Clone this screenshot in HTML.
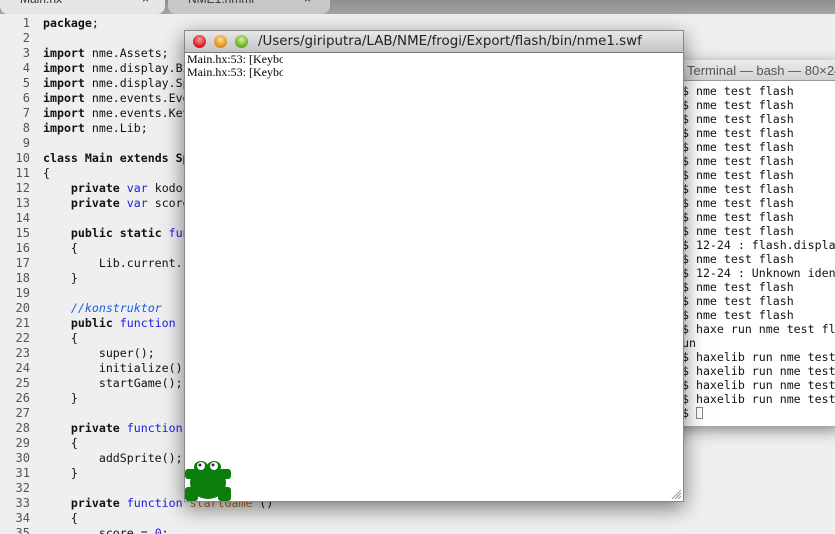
<!DOCTYPE html>
<html><head><style>
*{margin:0;padding:0;box-sizing:border-box}
body{width:835px;height:534px;overflow:hidden;background:#ececec;position:relative;font-family:"DejaVu Sans Mono","Liberation Mono",monospace}
.tabbar{position:absolute;left:0;top:0;width:835px;height:14px;background:linear-gradient(#8e8e8e,#a4a4a4);}
.tab{position:absolute;top:-6px;height:20px;border-radius:0 0 8px 8px;font:12px "Liberation Sans",sans-serif;color:#333;padding-left:20px;line-height:10px}
.editor{position:absolute;left:0;top:14px;width:835px;height:520px;background:#efefef;overflow:hidden}
.ln{position:absolute;left:0;width:30px;text-align:right;color:#555;font-size:12px;line-height:15px}
.code{position:absolute;left:43px;font-size:11.6px;line-height:15px;color:#111;white-space:pre}
.k{font-weight:bold}.b{color:#1a1ae0}.c{color:#1a5ee0;font-style:italic}.o{color:#b36a1a}
.term{position:absolute;left:600px;top:60px;width:240px;height:366px;background:#fff;box-shadow:0 4px 14px rgba(0,0,0,.45)}
.ttitle{height:21px;background:linear-gradient(#ececec,#d2d2d2);border-bottom:1px solid #999;font:13px "Liberation Sans",sans-serif;color:#555;padding-left:87px;line-height:21px;white-space:nowrap;overflow:hidden}
.ttext{position:absolute;left:82px;top:24px;font-size:11.6px;line-height:14px;white-space:pre;color:#111}
.swf{position:absolute;left:184px;top:30px;width:500px;height:472px;background:#fff;box-shadow:0 6px 20px rgba(0,0,0,.5);border:1px solid #888}
.stitle{height:22px;background:linear-gradient(#e8e8e8,#c4c4c4);border-bottom:1px solid #777;font:13.4px "DejaVu Sans",sans-serif;color:#222;line-height:22px;padding-left:73px;white-space:nowrap}
.dot{position:absolute;top:4px;width:13px;height:13px;border-radius:50%}
.stext{position:absolute;left:2px;top:22px;width:96px;overflow:hidden;font:12px "Liberation Serif",serif;line-height:13px;white-space:nowrap;color:#000}
</style></head><body>
<div class="editor">
<div class="ln" style="top:2px">1<br>2<br>3<br>4<br>5<br>6<br>7<br>8<br>9<br>10<br>11<br>12<br>13<br>14<br>15<br>16<br>17<br>18<br>19<br>20<br>21<br>22<br>23<br>24<br>25<br>26<br>27<br>28<br>29<br>30<br>31<br>32<br>33<br>34<br>35</div>
<div class="code" style="top:2px"><span class="k">package</span>;

<span class="k">import</span> nme.Assets;
<span class="k">import</span> nme.display.Bitmap;
<span class="k">import</span> nme.display.Sprite;
<span class="k">import</span> nme.events.Event;
<span class="k">import</span> nme.events.KeyboardEvent;
<span class="k">import</span> nme.Lib;

<span class="k">class</span> <span class="k">Main</span> <span class="k">extends</span> <span class="k">Sprite</span>
{
    <span class="k">private</span> <span class="b">var</span> kodok
    <span class="k">private</span> <span class="b">var</span> score

    <span class="k">public</span> <span class="k">static</span> <span class="b">function</span>
    {
        Lib.current.
    }

    <span class="c">//konstruktor</span>
    <span class="k">public</span> <span class="b">function</span>
    {
        super();
        initialize();
        startGame();
    }

    <span class="k">private</span> <span class="b">function</span>
    {
        addSprite();
    }

    <span class="k">private</span> <span class="b">function</span> <span class="o">startGame</span> ()
    {
        score = <span class="b">0</span>;</div>
</div>
<div class="tabbar"></div>
<div class="tab" style="left:0;width:165px;background:#e6e6e6">Main.hx<span style="position:absolute;left:142px">×</span></div>
<div class="tab" style="left:168px;width:162px;background:#c8c8c8">NME1.nmml<span style="position:absolute;left:136px">×</span></div>
<div class="term"><div class="ttitle">Terminal — bash — 80×24</div>
<div class="ttext">$ nme test flash
$ nme test flash
$ nme test flash
$ nme test flash
$ nme test flash
$ nme test flash
$ nme test flash
$ nme test flash
$ nme test flash
$ nme test flash
$ nme test flash
$ 12-24 : flash.display
$ nme test flash
$ 12-24 : Unknown ident
$ nme test flash
$ nme test flash
$ nme test flash
$ haxe run nme test flash
un
$ haxelib run nme test
$ haxelib run nme test
$ haxelib run nme test
$ haxelib run nme test
$ <span style="display:inline-block;width:7px;height:12px;border:1px solid #888;vertical-align:-2px"></span></div></div>
<div class="swf"><div class="stitle">/Users/giriputra/LAB/NME/frogi/Export/flash/bin/nme1.swf</div>
<div class="dot" style="left:8px;background:radial-gradient(circle at 50% 35%,#ff9a9a,#d0141a 70%)"></div>
<div class="dot" style="left:29px;background:radial-gradient(circle at 50% 35%,#ffe09a,#e08a10 70%)"></div>
<div class="dot" style="left:50px;background:radial-gradient(circle at 50% 35%,#d6f5a0,#5fa818 70%)"></div>
<div class="stext">Main.hx:53: [KeyboardEvent]<br>Main.hx:53: [KeyboardEvent]</div>
<svg style="position:absolute;left:0;top:428px" width="48" height="44" viewBox="0 0 48 44">
<g fill="#0a7d0a">
<ellipse cx="23" cy="24" rx="18" ry="16"/>
<ellipse cx="16" cy="8" rx="7" ry="6"/><ellipse cx="29" cy="8" rx="7" ry="6"/>
<rect x="0" y="10" width="12" height="10" rx="3"/><rect x="34" y="10" width="12" height="10" rx="3"/>
<rect x="0" y="28" width="13" height="14" rx="3"/><rect x="33" y="28" width="13" height="14" rx="3"/>
</g>
<ellipse cx="16" cy="7" rx="4" ry="4" fill="#fff"/><ellipse cx="29" cy="7" rx="4" ry="4" fill="#fff"/>
<circle cx="15" cy="6" r="1.5" fill="#333"/><circle cx="28" cy="6" r="1.5" fill="#333"/>
</svg>
<svg style="position:absolute;right:1px;bottom:1px" width="11" height="11"><path d="M10 1L1 10M10 4L4 10M10 7L7 10" stroke="#999" stroke-width="1"/></svg>
</div>
</body></html>
